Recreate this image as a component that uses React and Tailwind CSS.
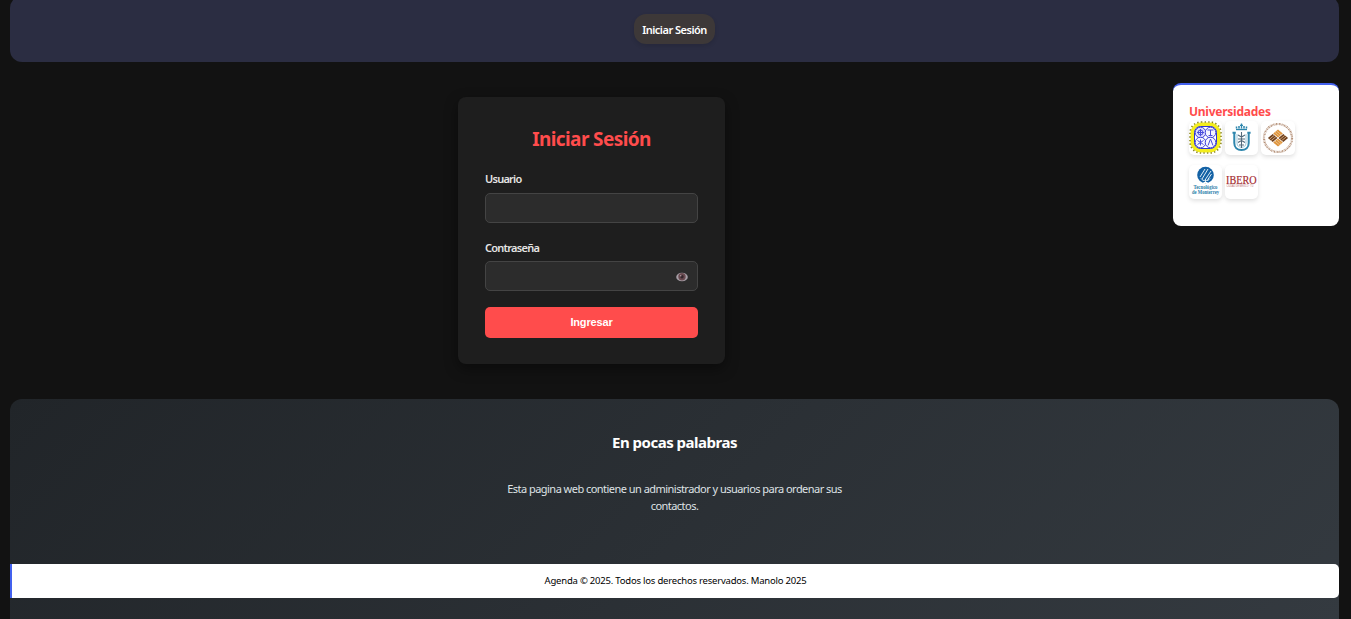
const Gear = () => (
  <svg viewBox="0 0 33 33" className="size-[33px]">
    <rect x="1.500" y="1.500" width="30" height="30" rx="11" fill="#f4ee1c" />
    <rect x="1" y="1" width="31" height="31" rx="11" fill="none" stroke="#8f8a20" strokeWidth="1.600" strokeDasharray="1.400 2.200" />
    <rect x="5.500" y="5.500" width="22" height="22" rx="6" fill="#fff" stroke="#3134d4" />
    <g stroke="#3134d4" strokeWidth=".9" fill="#f4f4ff">
      <circle cx="11.500" cy="11.500" r="5.300" fill="#dcdcff" />
      <circle cx="21.500" cy="11.500" r="5.300" />
      <circle cx="11.500" cy="21.500" r="5.300" />
      <circle cx="21.500" cy="21.500" r="5.300" />
    </g>
    <g stroke="#4a4ddb" strokeWidth="1" fill="none">
      <circle cx="11.500" cy="11.500" r="2.500" />
      <path d="M11.500 8v7M8 11.500h7M18.500 9h6M19.500 14.500h4M21.500 9v5M8.500 19.500l6 4M14.500 19.500l-6 4M11.500 18.500v6M19 24.500l2.500-6.500 2.500 6.500" />
    </g>
  </svg>
);

const Crown = () => (
  <svg viewBox="0 0 33 33" className="size-[33px]" fill="none" stroke="#2d86ad">
    <path d="M11 8.500h11" strokeWidth="1.400" />
    <path d="M11.500 5.500v2M14 5v2.500M19 5v2.500M21.500 5.500v2" strokeWidth="1.500" />
    <path d="M16.500 2.500v5M15 4.300h3" strokeWidth="1.300" />
    <path d="M7.500 11.700h3.300M9.300 12v10c0 4.500 3 7 7.200 7s7.200-2.500 7.200-7V12M22.300 11.700h3.300" strokeWidth="2" />
    <path d="M12 13v9c0 3 2 4.300 4.500 4.300S21 25 21 22v-9" stroke="#9dc8db" strokeWidth="1" />
    <path d="M16.500 11v16M13 14l3.500 2 3.500-2M13 18h7M13 21.500l3.500-2 3.500 2M14 24h5" stroke="#526a7b" strokeWidth="1.100" />
  </svg>
);

const Anahuac = () => (
  <svg viewBox="0 0 34 34" className="size-[34px]">
    <circle cx="17" cy="17" r="14" fill="none" stroke="#b08a70" strokeWidth="2.200" strokeDasharray="1.300 .8 .7 1" pathLength="120" />
    <g transform="translate(17 17) scale(1.150 .96) rotate(45)">
      <path d="M-6.200-6.200h5.900v5.900h-5.900zM.3.300h5.900v5.900H.3z" fill="#df943c" />
      <path d="M.3-6.200h5.900v5.900H.3zM-6.200.3h5.900v5.900h-5.900z" fill="#70401e" />
      <path d="M-6.200-4.300h5.900M-6.200-2.300h5.900M.3 2.200h5.900M.3 4.200h5.900M2.200-6.200v5.900M4.200-6.200v5.900M-4.300.3v5.900M-2.300.3v5.900" stroke="#f1d0a2" strokeWidth=".6" />
    </g>
  </svg>
);

const Tec = () => (
  <svg viewBox="0 0 33 33" className="size-[33px]">
    <circle cx="16.500" cy="10" r="8.300" fill="#1462a5" />
    <path d="M11 12l5-8M13 14l6-10M16 15l6-9M18.500 15l4-6M12 13.500c2 3 7 3 9 0M16.500 14v4" stroke="#dcecf5" strokeWidth="1" fill="none" />
    <path d="M14.500 17.500h4" stroke="#fff" />
    <text x="16.500" y="24" textAnchor="middle" fontFamily="Liberation Serif, serif" fontWeight="700" fontSize="5.400" textLength="24" lengthAdjust="spacingAndGlyphs" fill="#287ca8">Tecnológico</text>
    <text x="16.500" y="29" textAnchor="middle" fontFamily="Liberation Serif, serif" fontWeight="700" fontSize="5.400" textLength="27" lengthAdjust="spacingAndGlyphs" fill="#287ca8">de Monterrey</text>
  </svg>
);

const Ibero = () => (
  <svg viewBox="0 0 33 33" className="size-[33px] overflow-visible">
    <text x="1" y="18.500" fontFamily="Liberation Serif, serif" fontSize="13.500" textLength="30.500" lengthAdjust="spacingAndGlyphs" fill="#a52b2f" stroke="#a52b2f" strokeWidth=".2">IBERO</text>
    <text x="1.500" y="22.300" fontFamily="Liberation Sans, sans-serif" fontSize="3" textLength="27" lengthAdjust="spacingAndGlyphs" fill="#b76568">CIUDAD DE MÉXICO · TIJ</text>
  </svg>
);

const Eye = () => (
  <svg viewBox="0 0 12 10" className="mt-px h-[10px] w-3">
    <ellipse cx="6" cy="5" rx="5.800" ry="4.300" fill="#a79fa7" />
    <circle cx="6" cy="4.800" r="3.700" fill="#694a50" />
    <circle cx="6" cy="4.800" r="1.700" fill="#35262c" />
    <circle cx="4.700" cy="3.700" r=".8" fill="#b19aa0" />
  </svg>
);

const logos = [Gear, Crown, Anahuac, Tec, Ibero];

export default function App() {
  return (
    <div className="flex h-[619px] flex-col overflow-hidden bg-[#121212] pr-3 pl-2.5 font-['Noto_Sans',sans-serif] text-white">
      <header className="-mt-1 flex h-[66px] shrink-0 items-start justify-center rounded-xl bg-[#2b2d42] pt-[18px]">
        <a className="flex h-[30px] w-[81px] items-center justify-center rounded-xl bg-[#3d3838] pt-0.5 text-[11px] font-semibold tracking-[-0.5px] whitespace-nowrap shadow-[0_2px_4px_rgba(0,0,0,0.12)]">Iniciar Sesión</a>
      </header>

      <main className="flex h-[337px] shrink-0 items-start justify-between">
        <form className="mt-[35px] ml-[448px] flex h-[267px] w-[267px] flex-col rounded-lg bg-[#1e1e1e] px-[27px] pt-[29px] shadow-[0_5px_14px_rgba(0,0,0,0.4)]">
          <h1 className="text-center text-[19px] leading-[27px] font-bold tracking-[-0.6px] text-[#ff4c4c]">Iniciar Sesión</h1>
          <label className="mt-[18px] text-[11px] leading-4 font-semibold tracking-[-0.75px] text-[#e5e5e5]">Usuario</label>
          <input className="mt-[6px] h-[30px] w-full shrink-0 rounded-[5px] border border-[#444] bg-[#2c2c2c] px-2" />
          <label className="mt-[17px] text-[11px] leading-4 font-semibold tracking-[-0.75px] text-[#e5e5e5]">Contraseña</label>
          <div className="mt-[5px] flex h-[30px] shrink-0 items-center rounded-[5px] border border-[#444] bg-[#2c2c2c] pr-[9px]">
            <input type="password" className="h-full min-w-0 flex-1 bg-transparent px-2" />
            <Eye />
          </div>
          <button className="mt-4 h-[31px] shrink-0 rounded-[5px] bg-[#ff4c4c] font-['Liberation_Sans',sans-serif] text-[11px] font-bold tracking-[-0.15px]">Ingresar</button>
        </form>

        <aside className="mt-[21px] h-[143px] w-[166px] rounded-lg border-t-2 border-[#4361ee] bg-white px-4 pt-[17px]">
          <h2 className="text-[12px] leading-[19px] font-bold tracking-[-0.25px] text-[#ff4c4c]">Universidades</h2>
          <div className="flex flex-wrap gap-x-[3px] gap-y-[10px]">
            {logos.map((Logo, i) => (
              <span key={i} className="h-[34px] min-w-[33px] rounded-[5px] bg-white shadow-[0_2px_4px_rgba(0,0,0,0.12)]"><Logo /></span>
            ))}
          </div>
        </aside>
      </main>

      <section className="flex h-[220px] shrink-0 flex-col items-center rounded-t-xl bg-[linear-gradient(135deg,#212529,#343a40)]">
        <h2 className="mt-[32px] text-[15px] leading-[22px] font-bold tracking-[-0.5px]">En pocas palabras</h2>
        <p className="mt-[27px] w-[360px] text-center text-[11px] leading-[17px] tracking-[-0.53px] text-[#dfe2e5]">Esta pagina web contiene un administrador y usuarios para ordenar sus<br />contactos.</p>
        <footer className="mt-[50px] flex h-[34px] w-full shrink-0 items-center justify-center rounded-r-[5px] border-l-2 border-[#4361ee] bg-white pt-px text-[9.5px] tracking-[-0.21px] text-black">Agenda © 2025. Todos los derechos reservados. Manolo 2025</footer>
      </section>
    </div>
  );
}
